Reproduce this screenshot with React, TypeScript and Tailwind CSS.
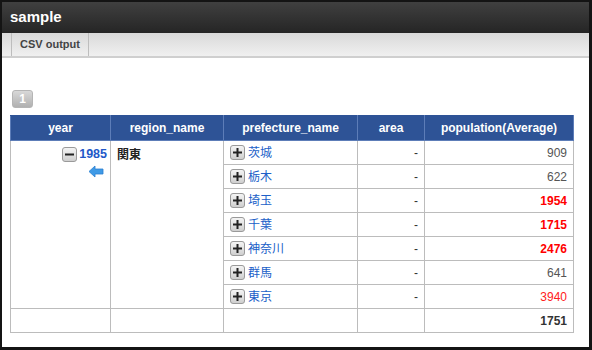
import { Fragment } from "react";

const prefectures = [
  { name: "茨城", value: "909", tone: "normal" },
  { name: "栃木", value: "622", tone: "normal" },
  { name: "埼玉", value: "1954", tone: "high" },
  { name: "千葉", value: "1715", tone: "high" },
  { name: "神奈川", value: "2476", tone: "high" },
  { name: "群馬", value: "641", tone: "normal" },
  { name: "東京", value: "3940", tone: "red" }
] as const;

const toneClass = {
  normal: "text-[#555]",
  high: "font-bold text-[#ff0000]",
  red: "text-[#ff2020]"
};

function ToggleButton({ sign }: { sign: "plus" | "minus" }) {
  return (
    <span className="inline-flex h-[15px] w-[15px] shrink-0 items-center justify-center rounded-[3px] border border-[#9a9a9a] bg-[linear-gradient(180deg,#f4f4f4_0%,#cfcfcf_100%)]">
      <svg width="11" height="11" viewBox="0 0 11 11">
        <rect x="1" y="4.5" width="9" height="2" fill="#222" />
        {sign === "plus" && <rect x="4.5" y="1" width="2" height="9" fill="#222" />}
      </svg>
    </span>
  );
}

function BackArrow() {
  return (
    <svg width="16" height="13" viewBox="0 0 16 13">
      <path d="M1 6.5 L7 1 L7 4 L15 4 L15 9 L7 9 L7 12 Z" fill="#3f9ae6" stroke="#2a7fd0" strokeWidth="0.8" />
    </svg>
  );
}

export default function App() {
  const cell = "border border-[#bcbcbc] px-[6px] text-[12px]";

  return (
    <div
      className="h-[350px] w-[592px] overflow-hidden border-b-[3px] border-l-2 border-r-[3px] border-t-2 border-[#141414] bg-white"
      style={{ fontFamily: '"Liberation Sans", Arial, "Noto Sans CJK JP", sans-serif' }}
    >
      <div className="flex h-[31px] items-center bg-[linear-gradient(180deg,#404040_0%,#252525_100%)] px-[8px]">
        <span className="text-[15px] font-bold text-white">sample</span>
      </div>
      <div className="flex h-[25px] border-b-2 border-[#cfcfcf] bg-[linear-gradient(180deg,#d9d9d9_0%,#f0f0f0_100%)] pl-[9px]">
        <div className="flex w-[78px] items-center justify-center border-l border-r border-[#bdbdbd] text-[11px] font-bold text-[#444]">
          CSV output
        </div>
      </div>

      <div className="px-[8px] pt-[32px]">
        <div className="ml-[2px] flex h-[18px] w-[21px] items-center justify-center rounded-[3px] border border-[#b5b5b5] bg-[linear-gradient(180deg,#d8d8d8_0%,#b0b0b0_100%)] text-[12px] font-bold text-white">
          1
        </div>

        <table className="mt-[7px] w-[563px] border-collapse border border-[#a8a8a8]" style={{ tableLayout: "fixed" }}>
          <colgroup>
            <col className="w-[100px]" />
            <col className="w-[113px]" />
            <col className="w-[134px]" />
            <col className="w-[67px]" />
            <col className="w-[149px]" />
          </colgroup>
          <thead>
            <tr className="h-[25px] bg-[#2e5396] text-[12px] font-bold text-white">
              {["year", "region_name", "prefecture_name", "area", "population(Average)"].map((h) => (
                <th key={h} className="border border-[#5d7db8] border-t-[#2e5396] px-1 text-center font-bold">
                  {h}
                </th>
              ))}
            </tr>
          </thead>
          <tbody>
            {prefectures.map((p, i) => (
              <Fragment key={p.name}>
                <tr className="h-[24px]">
                  {i === 0 && (
                    <>
                      <td rowSpan={prefectures.length} className={`${cell} !pr-[3px] align-top`}>
                        <div className="flex flex-col items-end pt-[4px]">
                          <div className="flex items-center gap-[2px]">
                            <ToggleButton sign="minus" />
                            <span className="text-[12.5px] font-bold text-[#2258c8]">1985</span>
                          </div>
                          <div className="mr-[3px] mt-[1px]">
                            <BackArrow />
                          </div>
                        </div>
                      </td>
                      <td rowSpan={prefectures.length} className={`${cell} align-top`}>
                        <div className="pt-[5px] font-bold text-[#222]">関東</div>
                      </td>
                    </>
                  )}
                  <td className={cell}>
                    <div className="flex items-center gap-[3px]">
                      <ToggleButton sign="plus" />
                      <span className="text-[#2060c8]">{p.name}</span>
                    </div>
                  </td>
                  <td className={`${cell} text-right text-[#333]`}>-</td>
                  <td className={`${cell} text-right ${toneClass[p.tone]}`}>{p.value}</td>
                </tr>
              </Fragment>
            ))}
            <tr className="h-[24px]">
              <td className={cell} />
              <td className={cell} />
              <td className={cell} />
              <td className={cell} />
              <td className={`${cell} text-right font-bold text-[#333]`}>1751</td>
            </tr>
          </tbody>
        </table>
      </div>
    </div>
  );
}
